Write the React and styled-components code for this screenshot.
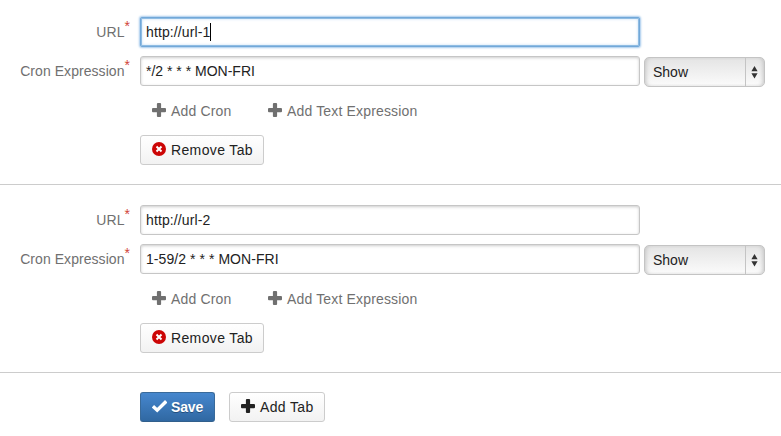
import React from "react";
import styled, { createGlobalStyle, css } from "styled-components";

const GlobalStyle = createGlobalStyle`
  * { box-sizing: border-box; }
  body {
    margin: 0;
    background: #fff;
    color: #222;
    font: 14px/20px "Liberation Sans", Arial, sans-serif;
    overflow: hidden;
  }
`;

const Page = styled.main`
  width: 781px;
  height: 436px;
  display: flex;
  flex-direction: column;
`;

const Section = styled.section`
  display: flex;
  flex-direction: column;
  gap: 9px;
  padding: ${(p) => (p.$first ? 17 : 20)}px 0 19px;
  border-bottom: 1px solid #ccc;
`;

const Row = styled.div`
  display: flex;
  height: ${(p) => p.$height || 30}px;
`;

const Label = styled.label`
  display: flex;
  justify-content: flex-end;
  width: 130px;
  margin-right: 10px;
  padding-top: 5px;
  color: #707070;
  letter-spacing: 0.06px;
`;

const Required = styled.span`
  color: #d04437;
  margin-top: -6px;
  letter-spacing: 0;
`;

const Field = styled.div`
  display: flex;
  align-items: center;
  width: 500px;
  height: 30px;
  padding: 0 5px;
  border: 1px solid #c6c6c6;
  border-radius: 3px;
  background: #fff;
  box-shadow: inset 0 1px 3px #ccc;
  white-space: pre;
  letter-spacing: ${(p) => p.$spacing || 0}px;
  ${(p) =>
    p.$focused &&
    css`
      border-color: #72a8d8;
      border-radius: 2px;
      box-shadow: inset 0 0 0 1px #8fbce3, inset 0 0 3px 1px #c3dcf3, 0 0 2px 1px #a5c9ec;
    `}
`;

const Caret = styled.span`
  width: 1px;
  height: 18px;
  background: #000;
`;

const Select = styled.div`
  display: flex;
  width: 121px;
  height: 30px;
  margin: 1px 0 0 4px;
  border: 1px solid #c4c4c4;
  border-radius: 5px;
  overflow: hidden;
  background: linear-gradient(#e4e4e4, #fbfbfb);
  box-shadow: inset 3px 0 4px -2px #c4c4c4, inset -3px 0 4px -2px #c4c4c4;
`;

const SelectText = styled.span`
  flex: 1;
  padding: 4px 0 0 8px;
`;

const SelectArrows = styled.span`
  display: flex;
  width: 19px;
  border-left: 1px solid #c4c4c4;
  padding: 8px 0 0 5px;
`;

const Actions = styled.div`
  display: flex;
  padding-left: 140px;
  gap: ${(p) => p.$gap || 0}px;
`;

const Button = styled.button`
  display: flex;
  align-items: center;
  width: ${(p) => p.$width}px;
  height: 30px;
  padding: 0 0 0 11px;
  gap: 4px;
  border: 1px solid #ccc;
  border-radius: 3px;
  background: linear-gradient(#fff, #f2f2f2);
  color: #222;
  font: inherit;
  letter-spacing: 0.36px;
  white-space: nowrap;
  ${(p) =>
    p.$link &&
    css`
      border-color: transparent;
      background: none;
      color: #707070;
      letter-spacing: 0.16px;
    `}
  ${(p) =>
    p.$primary &&
    css`
      border-color: #396a9a #396a9a #315f8c;
      background: linear-gradient(#4687ce, #3068a2);
      color: #fff;
      font-weight: bold;
      letter-spacing: -0.15px;
      text-shadow: 0 1px 0 #234f7d;
    `}
`;

const Icon = styled.svg`
  display: block;
  flex: none;
  margin-bottom: 2px;
`;

const Footer = styled.footer`
  padding-top: 19px;
`;

const PlusIcon = () => (
  <Icon width="15" height="14" viewBox="0 0 15 14">
    <path
      d="M5.900 0h2.200q1 0 1 1v4h3.900q1 0 1 1v2.200q0 1-1 1H9.100V13q0 1-1 1H5.900q-1 0-1-1V9.200H1q-1 0-1-1V6q0-1 1-1h3.900V1q0-1 1-1z"
      fill="currentColor"
    />
  </Icon>
);

const RemoveIcon = () => (
  <Icon width="15" height="14" viewBox="0 0 15 14">
    <circle cx="7" cy="7" r="7" fill="#cc0606" />
    <path d="M4.500 4.500l5 5m0-5l-5 5" stroke="#fff" strokeWidth="2" />
  </Icon>
);

const CheckIcon = () => (
  <Icon width="15" height="14" viewBox="0 0 15 14">
    <path d="M.9 7.200l4.300 4L14.200 2.300" fill="none" stroke="#fff" strokeWidth="3.400" />
  </Icon>
);

const ArrowsIcon = () => (
  <svg width="7" height="13" viewBox="0 0 7 13">
    <path d="M3.500 0L6.600 5.200H.4zM.4 7.300h6.200l-3.100 5.200z" fill="#333" />
  </svg>
);

function TabForm({ first, url, cron, cronSpacing }) {
  return (
    <Section $first={first}>
      <Row>
        <Label>
          URL<Required>*</Required>
        </Label>
        <Field $focused={first} $spacing={0.12}>
          {url}
          {first && <Caret />}
        </Field>
      </Row>
      <Row $height={31}>
        <Label>
          Cron Expression<Required>*</Required>
        </Label>
        <Field $spacing={cronSpacing}>{cron}</Field>
        <Select>
          <SelectText>Show</SelectText>
          <SelectArrows>
            <ArrowsIcon />
          </SelectArrows>
        </Select>
      </Row>
      <Actions>
        <Button $link $width={116}>
          <PlusIcon />
          Add Cron
        </Button>
        <Button $link $width={174}>
          <PlusIcon />
          Add Text Expression
        </Button>
      </Actions>
      <Actions>
        <Button $width={124}>
          <RemoveIcon />
          Remove Tab
        </Button>
      </Actions>
    </Section>
  );
}

export default function App() {
  return (
    <>
      <GlobalStyle />
      <Page>
        <TabForm first url="http://url-1" cron="*/2 * * * MON-FRI" />
        <TabForm url="http://url-2" cron="1-59/2 * * * MON-FRI" cronSpacing={0.06} />
        <Footer>
          <Actions $gap={14}>
            <Button $primary $width={75}>
              <CheckIcon />
              Save
            </Button>
            <Button $width={96}>
              <PlusIcon />
              Add Tab
            </Button>
          </Actions>
        </Footer>
      </Page>
    </>
  );
}
